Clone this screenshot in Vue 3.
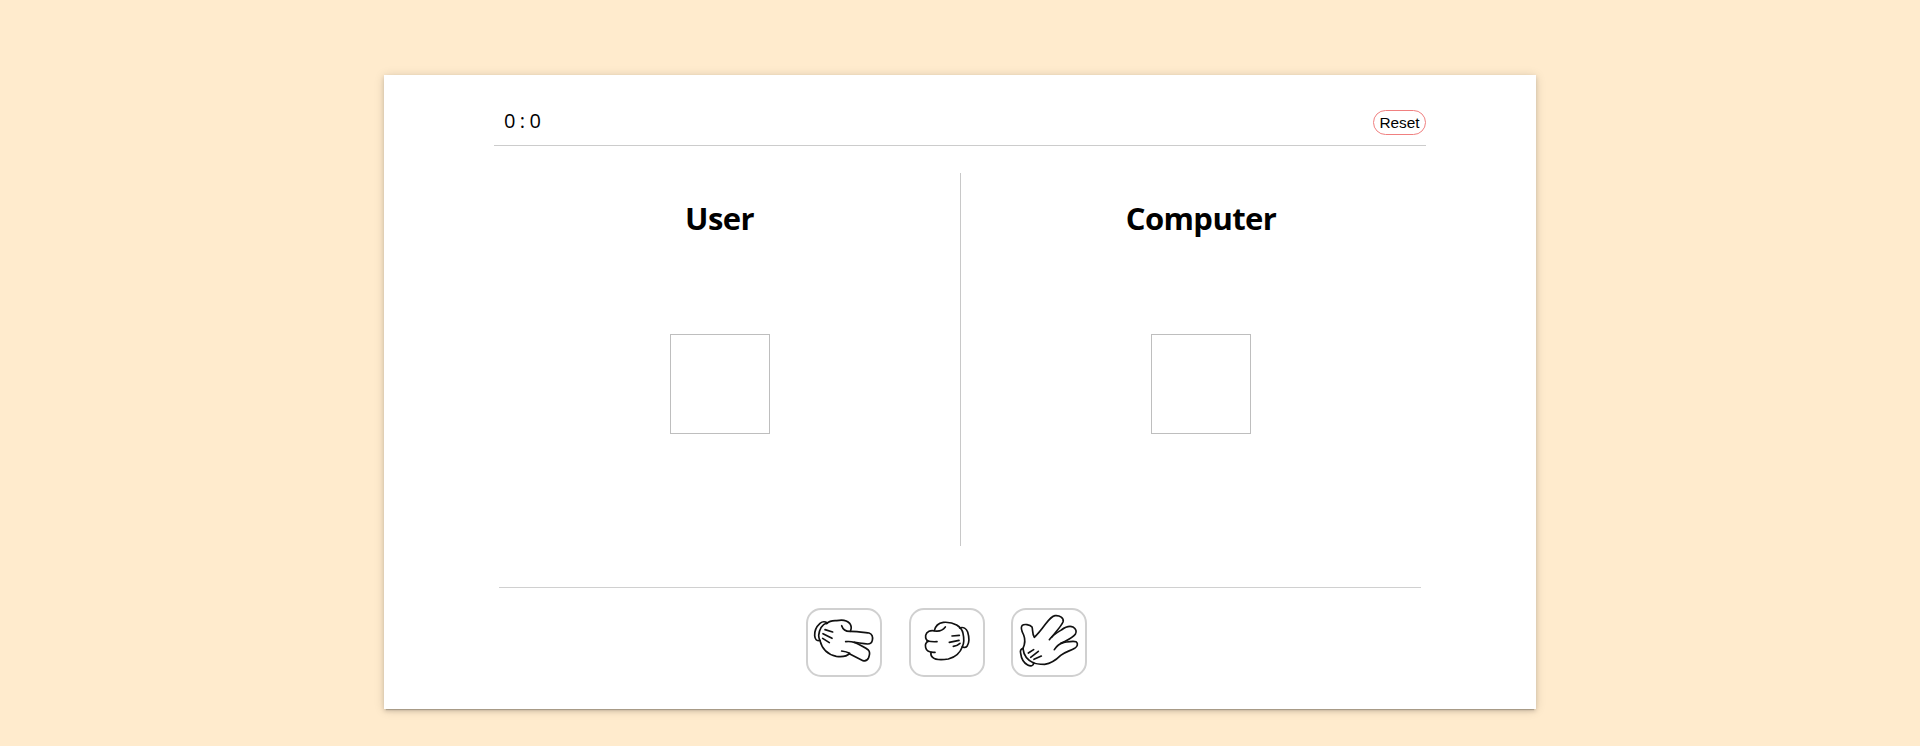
<script setup>
import { ref } from 'vue'

const score = ref({ user: 0, computer: 0 })
const players = ['User', 'Computer']
const hands = [
  {
    name: 'scissors',
    view: '24 30 216 195',
    paths: [
      'M82 69 C75 64 66 65 60 70 C49 80 43 93 44 107 C45 118 50 124 59 121',
      'M80 69 C66 74 58 90 56 106 C56 111 57 116 60 122',
      'M80 71 C88 63 98 61 110 62 C124 59 141 61 149 70 C154 77 155 86 151 94',
      'M125 77 C129 89 138 95 152 94 C170 94 190 97 207 99 C216 102 219 111 217 121 C215 130 211 132 203 132 C190 131 179 129 163 127',
      'M137 125 C147 124 156 125 163 127 C176 133 193 141 205 150 C211 156 209 165 206 173 C202 182 196 184 189 182 L148 161',
      'M125 153 C134 154 142 156 149 160 C140 170 124 171 109 169 C85 164 66 147 60 122',
      'M75 89 L98 96', 'M69 101 L96 115', 'M68 115 L88 128',
    ],
  },
  {
    name: 'rock',
    view: '33 30 216 195',
    paths: [
      'M103 92 C106 78 116 69 130 67 C144 66 158 68 170 75 C180 81 187 89 189 100 C192 113 193 128 187 140 C180 160 163 172 145 177 C125 180 106 180 98 172 C93 168 92 162 93 157',
      'M136 81 C129 90 118 95 105 93 C92 89 79 95 77 106 C76 115 79 121 86 124 C77 127 75 135 77 143 C79 153 87 158 105 157',
      'M81 123 C91 125 100 126 111 125',
      'M179 84 C190 80 199 86 203 96 C207 109 208 127 202 137 C198 143 191 144 187 140',
      'M156 108 L178 106', 'M148 127 L177 121', 'M160 139 Q171 138 180 130',
    ],
  },
  {
    name: 'paper',
    view: '24 30 216 195',
    paths: [
      'M54 145 C60 132 62 120 56 105 C51 95 46 83 51 77 C57 71 75 73 81 81 C84 89 81 101 88 112 C99 102 110 88 121 73 C130 61 139 49 150 47 C164 45 178 55 174 66 C166 83 151 96 140 112',
      'M133 119 C143 105 157 97 169 90 C181 81 194 77 204 81 C213 86 216 95 211 103 C201 116 183 122 168 130',
      'M148 149 C155 137 164 130 177 127 C191 125 204 122 213 125 C221 131 217 140 209 145 C194 153 180 156 167 166 C153 180 139 190 119 193 C105 193 93 193 85 188',
      'M54 146 C47 146 45 153 47 160 C49 176 57 189 68 195 C77 200 86 198 86 190',
      'M54 146 C56 165 65 180 86 189',
      'M86 149 L70 159', 'M100 154 L77 172', 'M109 168 L87 178',
    ],
  },
]

function reset() {
  score.value = { user: 0, computer: 0 }
}
</script>

<template>
  <div class="page">
    <main class="card">
      <header class="top">
        <span class="score">{{ score.user }} : {{ score.computer }}</span>
        <button class="reset" @click="reset">Reset</button>
      </header>
      <section class="board">
        <div v-for="p in players" :key="p" class="player">
          <h1>{{ p }}</h1>
          <div class="slot"></div>
        </div>
      </section>
      <footer class="choices">
        <button v-for="h in hands" :key="h.name" class="choice" :aria-label="h.name">
          <svg :viewBox="h.view" width="72" height="65">
            <path v-for="d in h.paths" :key="d" :d="d" />
          </svg>
        </button>
      </footer>
    </main>
  </div>
</template>

<style>
body {
  background: #ffebcd;
}
</style>

<style scoped>
.page {
  height: 746px;
  box-sizing: border-box;
  padding-top: 75px;
  background: #ffebcd;
  font-family: "Segoe UI", "Open Sans", "Noto Sans", sans-serif;
  color: #000;
  overflow: hidden;
}
.card {
  width: 1152px;
  height: 634px;
  margin: 0 auto;
  display: flex;
  flex-direction: column;
  align-items: center;
  background: #fff;
  box-shadow: 0 3px 1px -2px rgba(0, 0, 0, 0.2), 0 2px 4px rgba(0, 0, 0, 0.14), 0 1px 10px rgba(0, 0, 0, 0.14);
}
.top {
  width: 932px;
  height: 71px;
  box-sizing: border-box;
  padding: 34px 0 10px 10px;
  display: flex;
  justify-content: space-between;
  align-items: flex-start;
  border-bottom: 1px solid #ccc;
}
.score {
  font-size: 20px;
  line-height: 24px;
  letter-spacing: -0.4px;
}
.reset {
  width: 53px;
  height: 25px;
  margin-top: 1px;
  padding: 0;
  border: 1px solid #f08080;
  border-radius: 13px;
  background: #fff;
  font: 15.4px "Liberation Sans", Arial, sans-serif;
  color: #000;
}
.board {
  width: 962px;
  height: 373px;
  margin-top: 27px;
  display: grid;
  grid-template-columns: 1fr 1fr;
}
.player {
  display: flex;
  flex-direction: column;
  align-items: center;
}
.player + .player {
  border-left: 1px solid #c8c8c8;
}
h1 {
  margin: 24px 0 0;
  font-size: 31px;
  line-height: 43px;
  font-weight: 700;
  letter-spacing: -0.6px;
}
.slot {
  width: 98px;
  height: 98px;
  margin-top: 94px;
  border: 1px solid #bebebe;
}
.choices {
  width: 922px;
  margin-top: 41px;
  padding: 20px 27px 0 0;
  box-sizing: border-box;
  display: flex;
  justify-content: center;
  gap: 26.5px;
  border-top: 1px solid #d0d0d0;
}
.choice {
  width: 76px;
  height: 69px;
  padding: 0;
  box-sizing: border-box;
  border: 2px solid #d0d0d0;
  border-radius: 15px;
  background: #fff;
}
svg {
  display: block;
  fill: none;
  stroke: #111;
  stroke-width: 5;
  stroke-linecap: round;
  stroke-linejoin: round;
}
</style>
